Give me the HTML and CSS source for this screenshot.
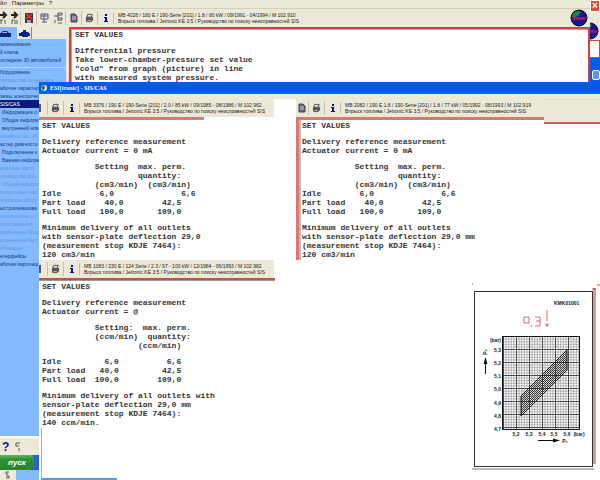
FILE: index.html
```html
<!DOCTYPE html>
<html lang="ru">
<head>
	<meta charset="UTF-8">
	<title>ESI[tronic] - SIS/CAS</title>
	<link rel="stylesheet" href="styles.css">
</head>
<body>
	<!-- icons -->
	<svg class="defs" aria-hidden="true">
		<symbol id="doc" viewBox="0 0 8 10"><path d="M1 1h4l2 2v6H1z" fill="#667" stroke="#445"/><path d="M2 4h4M2 6h4" stroke="#ccd"/></symbol>
		<symbol id="printer" viewBox="0 0 10 10"><path d="M3 1h5L7 4H2z" fill="#eee" stroke="#444"/><path d="M1 4h8v4H1z" fill="#555"/><path d="M2 7h5v2H2z" fill="#ddc" stroke="#444"/></symbol>
		<symbol id="info" viewBox="0 0 8 10"><path d="M3 1h2v2H3zM2 4h3v4h1v1H2V8h1V5H2z" fill="#00107c"/></symbol>
		<symbol id="globe" viewBox="0 0 18 18"><circle cx="9" cy="9" r="8" fill="#1a129c" stroke="#111"/><path d="M2 8Q2 3 8 2l3 1-3 4-4 2z" fill="#168a3c"/><path d="M2 8h14v3H2z" fill="#7b1470"/><path d="M4 9h10" stroke="#d02060" stroke-dasharray="2 1"/></symbol>
		<symbol id="car" viewBox="0 0 12 8"><path d="M0 3h2l2-2h4l2 2h2v4H0z" fill="#102080"/><path d="M4 2h4v1H3z" fill="#9bd"/></symbol>
		<symbol id="engine" viewBox="0 0 12 8"><path d="M1 3h2V2h2V0h3v2h2l2 2v2h-2v1H4V6H1z" fill="#102080"/></symbol>
	</svg>

	<div class="app">
		<div class="menubar">
			<a href="#">йл</a><a href="#">Параметры</a><a href="#">?</a>
		</div>
		<div class="toolbar">
			<button class="f11" aria-label="F11"><svg width="9" height="14" viewBox="0 0 9 14"><path d="M0 4h4M3 1l3 3-3 3" fill="none" stroke="#222" stroke-width="2"/><path d="M0 9h3M1 9v4M5 9v4" stroke="#555"/></svg></button>
			<button class="f12" aria-label="F12"><svg width="9" height="14" viewBox="0 0 9 14"><path d="M1 4h5M4 1l3 3-3 3" fill="none" stroke="#222" stroke-width="2"/><path d="M2 9h2M2 9v4M5 9v4M7 9v4" stroke="#555"/></svg></button>
			<button class="sep" aria-label="Закрыть"><svg width="8" height="10"><path d="M0 0h8v10H0z" fill="#334"/><path d="M1 1l6 5M7 1L1 6" stroke="#d33" stroke-width="2"/><path d="M2 7h4v3H2z" fill="#a9b"/></svg></button>
			<button class="sep" aria-label="Список"><svg width="9" height="10"><path d="M1 1h7v5H1zM1 3h7M4 1v8M2 9h5" fill="none" stroke="#558"/></svg></button>
			<button class="tree" aria-label="Дерево"><svg width="9" height="12"><path d="M0 4h4M4 1v8M4 1h4v2H4M4 6h4v2H4M1 8v3M4 11h4" fill="none" stroke="#555"/></svg></button>
			<button class="sep" aria-label="Документ"><svg width="8" height="10"><use href="#doc"/></svg></button>
			<button class="sep" aria-label="Печать"><svg width="9" height="10"><use href="#printer"/></svg></button>
			<button class="sep" aria-label="Информация"><svg width="8" height="10"><use href="#info"/></svg></button>
			<p class="vehicle sep">MB 4028 / 180 E / 190-Serie [201] / 1.8 / 80 kW / 09/1991 - 04/1994 / M 102.910<br>Впрыск топлива / Jetronic KE 3.5 / Руководство по поиску неисправностей SIS</p>
			<svg class="logo" width="18" height="18"><use href="#globe"/></svg>
		</div>
		<div class="main">
			<div class="sidebar">
				<div class="tabs">
					<button class="tab on" aria-label="Автомобиль"><svg width="12" height="8"><use href="#car"/></svg></button>
					<button class="tab" aria-label="Двигатель"><svg width="12" height="8"><use href="#engine"/></svg></button>
				</div>
				<ul class="search">
					<li>аименование</li>
					<li>й ключа</li>
					<li>оследние 30 автомобилей</li>
				</ul>
				<ul class="nav">
					<li>борудование</li>
					<li class="off">уководства по ремонту</li>
					<li>абочие характер</li>
					<li>хемы электричес</li>
					<li class="active">SIS/CAS</li>
					<li class="sub">Информация о г</li>
					<li class="sub">Общая информ</li>
					<li class="sub">внутренней нов</li>
					<li class="off">вания по тех. об</li>
					<li>астер диагности</li>
					<li class="sub">Подключение к</li>
					<li class="sub">Важная информ</li>
					<li class="off">апасные части</li>
					<li class="off">уководства для</li>
					<li class="off sub">Общая информ</li>
					<li class="off">онтрольные пар</li>
					<li class="off">нтервалы обслу</li>
					<li>ыстроизнашива</li>
					<li class="off">еханические уз</li>
					<li class="off">опоставления</li>
					<li class="off">рименение Прод</li>
					<li class="off">рименение Част</li>
					<li class="off">ебинации</li>
					<li>нтерфейсы</li>
					<li>абочая карточка</li>
				</ul>
				<div class="helpbar">
					<button class="help" aria-label="Справка">?</button>
					<svg width="6" height="12"><path d="M1 2h4M1 2v3h3M4 7v3" fill="none" stroke="#555"/></svg>
				</div>
				<div class="taskbar"><button class="start">пуск</button></div>
				<div class="below"><svg width="6" height="8"><path d="M1 1h3M1 1v2h2M1 5h3v2H1" fill="none" stroke="#555"/></svg></div>
			</div>
			<div class="content">
				<p>SET VALUES</p>
				<p>Differential pressure
Take lower-chamber-pressure set value
"cold" from graph (picture) in line
with measured system pressure.</p>
			</div>
		</div>
	</div>

	<!-- edge of the window that lies behind -->
	<div class="behind">
		<button class="close" aria-label="Закрыть">×</button>
		<svg width="18" height="18"><use href="#globe"/></svg>
		<div class="frame"></div>
		<div class="blue"><span></span></div>
	</div>

	<div class="window">
		<div class="titlebar">
			<svg width="8" height="8" viewBox="0 0 8 8"><circle cx="4" cy="4" r="3" fill="#dce8c8"/><path d="M1 3l3-2 1 3-2 3z" fill="#287050"/></svg>
			<h1>ESI[tronic] - SIS/CAS</h1>
		</div>
		<div class="strip"></div>
		<div class="panes">
			<div class="pane">
				<div class="head">
					<button aria-label="Документ"><svg width="3" height="10" viewBox="5 0 3 10"><path d="M5 1h2v8H5z" fill="#556"/></svg></button>
					<button class="sep" aria-label="Печать"><svg width="9" height="10"><use href="#printer"/></svg></button>
					<button class="sep" aria-label="Информация"><svg width="8" height="10"><use href="#info"/></svg></button>
					<p class="vehicle sep">MB 3376 / 190 E / 190-Serie [201] / 2.0 / 85 kW / 09/1985 - 08/1986 / M 102.962<br>Впрыск топлива / Jetronic KE 3.5 / Руководство по поиску неисправностей SIS</p>
				</div>
				<div class="rule short"></div>
				<div class="values">
					<p>SET VALUES</p>
					<p>Delivery reference measurement
Actuator current = 0 mA</p>
					<table>
						<tr><td></td><th>Setting</th><th>max. perm.</th></tr>
						<tr><td></td><td></td><th>quantity:</th></tr>
						<tr><td></td><th>(cm3/min)</th><th>  (cm3/min)</th></tr>
						<tr><td>Idle</td><td> 6,0</td><td>         6,6</td></tr>
						<tr><td>Part load</td><td>  40,0</td><td>     42,5</td></tr>
						<tr><td>Full load</td><td> 100,0</td><td>    109,0</td></tr>
					</table>
					<p>Minimum delivery of all outlets
with sensor-plate deflection 29,0
(measurement stop KDJE 7464):
120 cm3/min</p>
				</div>
			</div>

			<div class="pane right">
				<div class="headrow">
					<div class="head">
						<button aria-label="Документ"><svg width="8" height="10"><use href="#doc"/></svg></button>
						<button class="sep" aria-label="Печать"><svg width="9" height="10"><use href="#printer"/></svg></button>
						<button class="sep" aria-label="Информация"><svg width="8" height="10"><use href="#info"/></svg></button>
						<p class="vehicle sep">MB 2082 / 190 E 1.8 / 190-Serie [201] / 1.8 / 77 kW / 05/1992 - 08/1993 / M 102.919<br>Впрыск топлива / Jetronic KE 3.5 / Руководство по поиску неисправностей SIS</p>
					</div>
					<div class="filler"></div>
				</div>
				<div class="values">
					<p>SET VALUES</p>
					<p>Delivery reference measurement
Actuator current = 0 mA</p>
					<table>
						<tr><td></td><th>Setting</th><th>max. perm.</th></tr>
						<tr><td></td><td></td><th>quantity:</th></tr>
						<tr><td></td><th>(cm3/min)</th><th>  (cm3/min)</th></tr>
						<tr><td>Idle</td><td> 6,0</td><td>         6,6</td></tr>
						<tr><td>Part load</td><td>  40,0</td><td>     42,5</td></tr>
						<tr><td>Full load</td><td> 100,0</td><td>    109,0</td></tr>
					</table>
					<p>Minimum delivery of all outlets
with sensor-plate deflection 29,0 mm
(measurement stop KDJE 7464):
120 cm3/min</p>
				</div>
			</div>

			<div class="pane last">
				<div class="head">
					<button aria-label="Документ"><svg width="3" height="10" viewBox="5 0 3 10"><path d="M5 1h2v8H5z" fill="#556"/></svg></button>
					<button class="sep" aria-label="Печать"><svg width="9" height="10"><use href="#printer"/></svg></button>
					<button class="sep" aria-label="Информация"><svg width="8" height="10"><use href="#info"/></svg></button>
					<p class="vehicle sep">MB 1083 / 230 E / 124 Serie / 2.3 / 97 - 100 kW / 12/1984 - 06/1993 / M 102.982<br>Впрыск топлива / Jetronic KE 3.5 / Руководство по поиску неисправностей SIS</p>
				</div>
				<div class="rule"></div>
				<div class="values">
					<p>SET VALUES</p>
					<p>Delivery reference measurement
Actuator current = @</p>
					<table>
						<tr><td></td><th>Setting:</th><th> max. perm.</th></tr>
						<tr><td></td><th>(ccm/min)</th><th>  quantity:</th></tr>
						<tr><td></td><td></td><th>(ccm/min)</th></tr>
					</table>
					<table>
						<tr><td>Idle</td><td>  6,0</td><td>      6,6</td></tr>
						<tr><td>Part load</td><td> 40,0</td><td>     42,5</td></tr>
						<tr><td>Full load</td><td>100,0</td><td>    109,0</td></tr>
					</table>
					<p>Minimum delivery of all outlets with
sensor-plate deflection 29,0 mm
(measurement stop KDJE 7464):
140 ccm/min.</p>
				</div>
				<div class="corner"></div>
			</div>

			<div class="graph">
				<svg width="130" height="190" viewBox="470 283 130 190">
					<defs>
						<pattern id="grid" x="503" y="336" width="13" height="13" patternUnits="userSpaceOnUse">
							<path d="M3.1 0v13M5.7 0v13M8.3 0v13M10.9 0v13M0 3.1h13M0 5.7h13M0 8.3h13M0 10.9h13" stroke="#777" stroke-width=".5"/>
							<path d="M.5 0v13M0 .5h13" stroke="#222" stroke-width=".8"/>
						</pattern>
						<pattern id="hatch" width="2" height="2" patternUnits="userSpaceOnUse"><path d="M0 0l2 2" stroke="#111" stroke-width=".8"/></pattern>
					</defs>
					<path d="M593 288h3v176h-3z" fill="#dc9a9a"/>
					<path d="M592 289h4M597 285h3M472 284h1" stroke="#c44"/>
					<path d="M472 469h122" stroke="#bbb" stroke-width="2"/>
					<rect x="474.5" y="291.5" width="118" height="175" fill="#fff" stroke="#333"/>
					<text x="554" y="305" class="code">KMK01001</text>
					<path d="M524 317h5v6h-5zM532 325l-1 2M535 317h5v9h-5M536 321h4M547 310v11M546 324h2v2h-2z" fill="none" stroke="#c84848" stroke-width=".8"/>
					<rect x="502.5" y="336.5" width="77" height="93" fill="url(#grid)" stroke="#111"/>
					<path d="M521 396l46-46v20l-46 46z" fill="url(#hatch)" stroke="#111"/>
					<g class="axis" text-anchor="end">
						<text x="501" y="342">(bar)</text>
						<text x="501" y="352">5,3</text>
						<text x="501" y="365">5,2</text>
						<text x="501" y="378">5,1</text>
						<text x="501" y="391">5,0</text>
						<text x="501" y="405">4,9</text>
						<text x="501" y="418">4,8</text>
						<text x="501" y="431">4,7</text>
					</g>
					<g class="axis" text-anchor="middle">
						<text x="516" y="436">5,2</text>
						<text x="529" y="436">5,3</text>
						<text x="542" y="436">5,4</text>
						<text x="554" y="436">5,5</text>
						<text x="567" y="436">5,6</text>
						<text x="579" y="436">(bar)</text>
						<text x="565" y="443">P₁</text>
						<text transform="translate(487 352) rotate(-90)">P₂</text>
					</g>
					<path d="M485.5 374v-12M538 440.5h17" stroke="#111"/>
					<path d="M483.5 364l2-7 2 7zM553 438.5l7 2-7 2z" fill="#111"/>
				</svg>
			</div>
		</div>
	</div>
</body>
</html>
```
FILE: styles.css
```css
*{margin: 0; padding: 0; box-sizing: border-box;}
body{
	position: relative;
	height: 100vh;
	overflow: hidden;
	background: #ece9d8;
	font-family: "Liberation Sans", sans-serif;
	font-size: 5px;
	color: #222;
}
ul{list-style-type: none;}
a{color: inherit; text-decoration: none;}
button{
	border: 0;
	background: none;
	font: inherit;
	display: flex;
	align-items: center;
	justify-content: center;
}
svg{display: block; flex: none;}
.defs{position: absolute; width: 0; height: 0;}

/* application behind */
.app{height: 100%; display: flex; flex-direction: column;}
.menubar{
	display: flex;
	gap: 5px;
	height: 9px;
	line-height: 7px;
	font-size: 6px;
	border-bottom: 1px solid #d4d0c0;
}
.toolbar{
	display: flex;
	align-items: center;
	height: 18px;
	margin-right: 12px;
}
.toolbar button, .head button{width: 16px; height: 14px;}
.toolbar .f11{width: 9px;}
.toolbar .f12{width: 11px;}
.toolbar .tree{width: 13px;}
.sep{border-left: 1px solid #c4c1b2;}
.vehicle{
	padding-left: 4px;
	line-height: 6px;
	white-space: nowrap;
}
.logo{margin-left: auto;}
.main{flex: 1; display: flex; min-height: 0; margin-right: 10px;}

.sidebar{
	width: 66px;
	margin-right: 3px;
	display: flex;
	flex-direction: column;
	background: #84baff;
	overflow: hidden;
	white-space: nowrap;
}
.tabs{display: flex; height: 12px; background: #ece9d8;}
.tab{width: 15px; padding-top: 2px; border-right: 1px solid #888;}
.tab.on{width: 17px; padding-right: 8px; border: 0; background: #84baff;}
.sidebar li{height: 8px; line-height: 8px; color: #123a78;}
.search{padding: 1px 0 3px; border-bottom: 1px solid #b4d6ff;}
.nav li:nth-child(n+3){width: 39px; overflow: hidden;}
.sidebar li.off{color: #6898d0;}
.sidebar li.sub{padding-left: 2px;}
.sidebar li.active{background: #0a1a80; color: #fff;}
.helpbar{
	display: flex;
	align-items: center;
	gap: 6px;
	height: 19px;
	margin-top: auto;
	padding-left: 2px;
	background: #ece9d8;
	border-top: 2px solid #fff;
}
.help{font: bold 12px "Liberation Sans", sans-serif; color: #0a1878;}
.taskbar{height: 15px; background: #2460dc;}
.start{
	width: 34px;
	height: 15px;
	border-radius: 0 4px 4px 0;
	background: linear-gradient(#62b85c, #309030 30%, #2c8428);
	font: italic bold 8px "Liberation Sans", sans-serif;
	color: #fff;
}
.below{height: 10px; width: 16px; padding: 1px 5px; background: #ece9d8;}

.content{
	flex: 1;
	display: flex;
	flex-direction: column;
	gap: 7px;
	padding: 1px 4px;
	border: 2px solid #c84840;
	box-shadow: inset 1px 1px #aaa;
	background: #fff;
}
.content, .values{
	font: bold 8px/9px "Liberation Mono", monospace;
	white-space: pre;
	color: #333;
}

.behind{
	position: absolute;
	top: 0;
	right: 0;
	width: 10px;
	height: 82px;
	overflow: hidden;
	display: flex;
	flex-direction: column;
	background: #ece9d8;
}
.close{
	height: 12px;
	width: 10px;
	border: 1px solid #fff;
	background: #dc5038;
	font-size: 10px;
	font-weight: bold;
	line-height: 8px;
	color: #fff;
}
.behind svg{margin: 10px 0 0 -9px;}
.frame{height: 18px; border: 1px solid #c84840; border-left: 0; background: #fff;}
.blue{flex: 1; padding: 12px 0 0 2px; background: #0a5ae8;}
.blue span{display: block; height: 10px; border: 1px solid #fff; border-radius: 2px; background: #5c90ec;}

/* front window */
.window{
	position: absolute;
	top: 82px;
	left: 39px;
	right: 0;
	bottom: 0;
	display: flex;
	flex-direction: column;
	background: #fff;
}
.titlebar{
	display: flex;
	align-items: center;
	gap: 2px;
	height: 12px;
	padding-left: 1px;
	background: linear-gradient(#0a5cf0, #0456e4 60%, #0a68f8);
}
.titlebar h1{font: bold 6px "Liberation Serif", serif; color: #fff;}
.strip{height: 5px; background: #ece9d8;}
.panes{
	flex: 1;
	display: grid;
	grid-template-columns: 257px 1fr;
	grid-template-rows: auto 1fr;
}
.head{
	display: flex;
	align-items: center;
	width: 235px;
	height: 18px;
	background: #ece9d8;
}
.head button:first-child{width: 8px; justify-content: flex-start;}
.rule{width: 236px; height: 3px; border-top: 2px solid #d04c48; border-bottom: 1px solid #999;}
.rule.short{width: 165px; border-top-color: #d87870;}
.values{
	display: flex;
	flex-direction: column;
	gap: 7px;
	padding: 1px 3px;
}
table{table-layout: fixed; border-collapse: collapse; width: 33ch;}
td, th{height: 9px; text-align: left; font-weight: bold;}
td:nth-child(1){width: 11ch;}
tr > :nth-child(2){width: 9ch;}

.headrow{display: flex;}
.right .head{width: 248px; height: 21px; border-bottom: 3px solid #d87870;}
.filler{
	flex: 1;
	margin-bottom: -4px;
	background: #ece9d8;
	border-top: 1px solid #dcd8c8;
	border-bottom: 2px solid #c86464;
}
.right .head button:first-child{width: 12px; padding-left: 2px;}
.right .values{border-left: 3px solid #d87870; box-shadow: inset 2px 0 #bbb;}

.last{display: flex; flex-direction: column;}
.corner{
	flex: 1;
	width: 76px;
	margin-left: 2px;
	border-left: 1px solid #d89aa8;
	border-bottom: 2px solid #5c98ec;
}
.graph{display: flex; justify-content: flex-end; padding-top: 23px;}
.code, .axis{font: bold 5px "Liberation Sans", sans-serif; fill: #222;}
```
